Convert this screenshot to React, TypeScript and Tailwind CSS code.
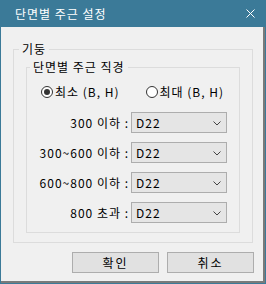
import React from 'react'

const rows = ['300 이하 :', '300~600 이하 :', '600~800 이하 :', '800 초과 :']

function Radio({ checked, label, className }: { checked?: boolean; label: string; className?: string }) {
  return (
    <div className={`flex items-center h-[14px] ${className ?? ''}`}>
      <div className="w-[12px] h-[12px] rounded-full border border-[#333333] bg-white flex items-center justify-center">
        {checked && <div className="w-[6px] h-[6px] rounded-full bg-[#333333]" />}
      </div>
      <span className="ml-[2px]">{label}</span>
    </div>
  )
}

function Select({ value }: { value: string }) {
  return (
    <div className="w-[96px] h-[21px] border border-[#adadad] bg-[#e5e5e5] flex items-center justify-between pl-[4px] pr-[5px]">
      <span>{value}</span>
      <svg width="8" height="5" viewBox="0 0 8 5" className="mt-[1px]">
        <path d="M0.5 0.5 L4 4 L7.5 0.5" fill="none" stroke="#444" strokeWidth="1" />
      </svg>
    </div>
  )
}

export default function App() {
  return (
    <div
      className="w-[266px] h-[284px] bg-[#3b7a98] flex flex-col text-[12px] leading-[14px] tracking-[1px] text-black"
      style={{ fontFamily: '"Noto Sans CJK KR", "Noto Sans", sans-serif' }}
    >
      <div className="h-[27px] flex items-center justify-between pl-[15px] pr-[11px] text-white">
        <span className="text-[12px] tracking-[1px]">단면별 주근 설정</span>
        <svg width="9" height="9" viewBox="0 0 9 9">
          <path d="M0.5 0.5 L8.5 8.5 M8.5 0.5 L0.5 8.5" stroke="#ffffff" strokeWidth="1" />
        </svg>
      </div>

      <div className="flex-1 mx-[1px] mb-[1px] bg-[#f0f0f0] border-r-2 border-b-2 border-[#7a7a7a] flex flex-col">
        <fieldset className="mt-[15px] ml-[12px] w-[240px] border border-[#dcdcdc] pb-[9px]">
          <legend className="ml-[5px] px-[3px] leading-[14px]">기둥</legend>

          <fieldset className="mt-[4px] mx-[12px] border border-[#dcdcdc] pb-[9px]">
            <legend className="ml-[3px] px-[3px] leading-[14px]">단면별 주근 직경</legend>

            <div className="flex items-center mt-[11px]">
              <Radio checked label="최소 (B, H)" className="ml-[14px]" />
              <Radio label="최대 (B, H)" className="ml-[26px]" />
            </div>

            <div className="flex flex-col gap-[9px] mt-[13px]">
              {rows.map((r) => (
                <div key={r} className="flex items-center">
                  <span className="w-[104px] text-right pr-[2px] whitespace-nowrap">{r}</span>
                  <Select value="D22" />
                </div>
              ))}
            </div>
          </fieldset>
        </fieldset>

        <div className="flex justify-end gap-[8px] mt-[9px] pr-[9px]">
          <button className="w-[87px] h-[21px] border border-[#adadad] bg-[#e1e1e1] tracking-[2px]">확인</button>
          <button className="w-[87px] h-[21px] border border-[#adadad] bg-[#e1e1e1] tracking-[2px]">취소</button>
        </div>
      </div>
    </div>
  )
}
